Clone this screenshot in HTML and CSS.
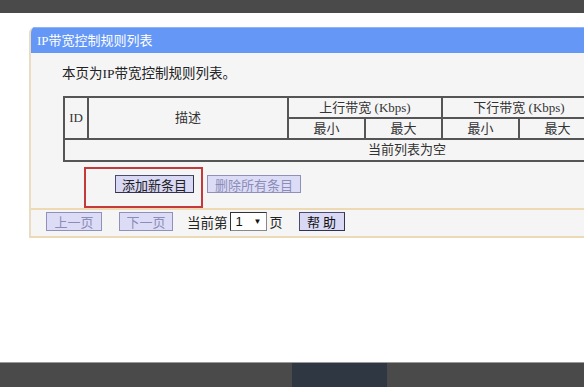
FILE: index.html
```html
<!DOCTYPE html>
<html lang="zh-CN">
<head>
    <meta charset="UTF-8">
    <meta name="viewport" content="width=device-width, initial-scale=1.0">
    <title>IP带宽控制规则列表</title>
    <link rel="stylesheet" href="styles.css">
</head>
<body>
    <div class="topbar"></div>

    <div class="page">
        <div class="panel">
            <div class="panel-title">IP带宽控制规则列表</div>
            <p class="intro">本页为IP带宽控制规则列表。</p>

            <table class="rules">
                <colgroup>
                    <col class="c-id">
                    <col class="c-desc">
                    <col class="c-bw">
                    <col class="c-bw">
                    <col class="c-bw">
                    <col class="c-bw">
                    <col class="c-bw">
                    <col class="c-bw">
                </colgroup>
                <thead>
                    <tr>
                        <th rowspan="2">ID</th>
                        <th rowspan="2">描述</th>
                        <th colspan="2">上行带宽 (Kbps)</th>
                        <th colspan="2">下行带宽 (Kbps)</th>
                        <th rowspan="2"></th>
                        <th rowspan="2"></th>
                    </tr>
                    <tr>
                        <th>最小</th>
                        <th>最大</th>
                        <th>最小</th>
                        <th>最大</th>
                    </tr>
                </thead>
                <tbody>
                    <tr>
                        <td colspan="8">当前列表为空</td>
                    </tr>
                </tbody>
            </table>

            <div class="actions">
                <div class="highlight">
                    <button class="btn">添加新条目</button>
                </div>
                <button class="btn btn-off btn-delete">删除所有条目</button>
            </div>

            <div class="pager">
                <button class="btn btn-off btn-prev">上一页</button>
                <button class="btn btn-off btn-next">下一页</button>
                <span class="pager-label">当前第</span>
                <span class="page-select">
                    <span>1</span>
                    <span class="arrow">▼</span>
                </span>
                <span class="pager-unit">页</span>
                <button class="btn btn-help">帮 助</button>
            </div>
        </div>
    </div>

    <div class="footer">
        <div class="footer-tab"></div>
    </div>
</body>
</html>
```

FILE: styles.css
```css
body {
    margin: 0;
    width: 584px;
    height: 387px;
    overflow: hidden;
    display: flex;
    flex-direction: column;
    background-color: #fff;
    font-family: "Liberation Serif", "Noto Sans CJK SC", serif;
    font-size: 13px;
    color: #333;
}
.topbar {
    flex: none;
    height: 13px;
    background-color: #4a4a4a;
}
.page {
    flex: 1;
    padding: 14px 0 0 29px;
    overflow: hidden;
}
.panel {
    width: 760px;
    background-color: #f5f5f5;
    border-left: 2px solid #eadcc2;
    border-bottom: 2px solid #ecd9b5;
    border-radius: 6px 0 0 0;
    overflow: hidden;
}
.panel-title {
    height: 25px;
    line-height: 25px;
    border-top: 1px solid #8fb3f8;
    padding-left: 6px;
    background-color: #6497f6;
    color: #fff;
    font-size: 13px;
}
.intro {
    margin: 11px 0 12px 31px;
    line-height: 20px;
    font-size: 13.5px;
    color: #222;
}
.rules {
    margin-left: 32px;
    width: 660px;
    table-layout: fixed;
    border-collapse: collapse;
}
.c-id {
    width: 24px;
}
.c-desc {
    width: 200px;
}
.c-bw {
    width: 77px;
}
.rules th, .rules td {
    height: 19px;
    padding: 0;
    border: 2px solid #555;
    line-height: 18px;
    text-align: center;
    font-weight: normal;
    font-size: 13px;
    color: #333;
}
.rules td {
    height: 20px;
}
.actions {
    display: flex;
    align-items: flex-start;
    gap: 4px;
    margin: 5px 0 0 53px;
}
.highlight {
    padding: 6px 7px 12px 29px;
    border: 2px solid #c43a3a;
}
.btn {
    box-sizing: border-box;
    height: 18px;
    padding: 0 6px;
    border: 1px solid #4b4b6e;
    border-right-color: #33334d;
    border-bottom-color: #33334d;
    background-color: #d9d9f5;
    font-family: "Noto Sans CJK SC", sans-serif;
    font-size: 13px;
    line-height: 15px;
    color: #222;
}
.btn-off {
    border-color: #9090b8;
    background-color: #dcdcf6;
    color: #8c8cb8;
}
.btn-delete {
    margin-top: 8px;
    padding: 0 7px;
}
.pager {
    display: flex;
    align-items: center;
    height: 24px;
    border-top: 2px solid #edd9b4;
    padding-left: 15px;
    padding-bottom: 2px;
    box-sizing: content-box;
}
.pager .btn {
    height: 19px;
    line-height: 16px;
}
.btn-prev {
    width: 56px;
}
.btn-next {
    width: 54px;
    margin-left: 17px;
}
.pager-label {
    margin-left: 14px;
    font-family: "Noto Sans CJK SC", sans-serif;
    font-size: 13.5px;
    color: #222;
}
.page-select {
    display: flex;
    align-items: center;
    justify-content: space-between;
    box-sizing: border-box;
    width: 37px;
    height: 19px;
    margin-left: 2px;
    padding: 0 4px 0 5px;
    border: 1px solid #333;
    border-right-color: #888;
    border-bottom-color: #888;
    background-color: #fff;
    font-family: "Liberation Sans", sans-serif;
    font-size: 13px;
    color: #111;
}
.arrow {
    font-size: 8px;
}
.pager-unit {
    margin-left: 3px;
    font-family: "Noto Sans CJK SC", sans-serif;
    color: #222;
}
.btn-help {
    width: 46px;
    margin-left: 16px;
    color: #111;
}
.footer {
    flex: none;
    height: 24px;
    padding-left: 292px;
    border-top: 1px solid #9a9a9a;
    background-color: #4a4a4a;
}
.footer-tab {
    width: 95px;
    height: 100%;
    background-color: #2f3742;
}
```
